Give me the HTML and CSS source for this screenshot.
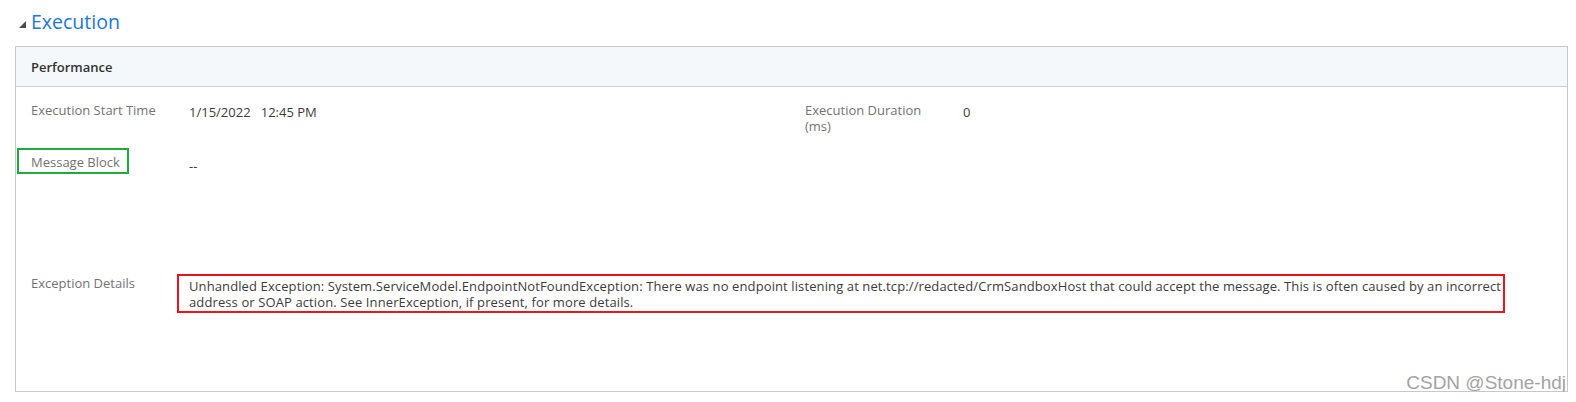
FILE: index.html
```html
<!DOCTYPE html>
<html lang="en">
<head>
<meta charset="utf-8">
<title>Execution</title>
<link rel="stylesheet" href="styles.css">
</head>
<body>
<div class="page">
  <div class="section-title">
    <svg class="caret" width="7" height="7" viewBox="0 0 7 7" aria-hidden="true"><polygon points="7,0 7,7 0,7" fill="#4a4a4a"/></svg>
    <span class="title-text">Execution</span>
  </div>
  <div class="panel">
    <div class="panel-header">Performance</div>
    <div class="panel-body">
      <div class="row row-two">
        <div class="label">Execution Start Time</div>
        <div class="value">1/15/2022&nbsp;&nbsp; 12:45 PM</div>
        <div class="label label-narrow">Execution Duration (ms)</div>
        <div class="value">0</div>
      </div>
      <div class="row row-msg">
        <div class="label"><span class="note-green">Message Block</span></div>
        <div class="value value-dash">--</div>
      </div>
      <div class="row row-exc">
        <div class="label">Exception Details</div>
        <div class="value value-boxed">Unhandled Exception: System.ServiceModel.EndpointNotFoundException: There was no endpoint listening at net.tcp://redacted/CrmSandboxHost that could accept the message. This is often caused by an incorrect<br>address or SOAP action. See InnerException, if present, for more details.</div>
      </div>
    </div>
    <div class="watermark">CSDN @Stone-hdj</div>
  </div>
</div>
</body>
</html>
```
FILE: styles.css
```css
html, body {
  margin: 0;
  padding: 0;
  background: #ffffff;
}

body {
  font-family: "Open Sans", "Noto Sans", sans-serif;
  color: #333333;
}

.page {
  padding: 0 8px 0 15px;
}

.section-title {
  height: 46px;
  box-sizing: border-box;
  padding-top: 8px;
  display: flex;
  align-items: flex-start;
}

.caret {
  margin: 13px 5px 0 4px;
  flex: none;
}

.title-text {
  font-size: 19.5px;
  line-height: 27px;
  color: #1a78d6;
}

.panel {
  position: relative;
  border: 1px solid #c8c8c8;
  height: 346px;
  box-sizing: border-box;
  display: flex;
  flex-direction: column;
}

.panel-header {
  background: #f4f8fb;
  border-bottom: 1px solid #cfcfcf;
  padding: 11px 15px 10px;
  font-size: 13px;
  line-height: 18px;
  font-weight: 600;
  color: #333333;
}

.panel-body {
  flex: 1;
  display: flex;
  flex-direction: column;
}

.row {
  display: grid;
  grid-template-columns: 158px 1fr;
  padding: 15px 0 0 15px;
  box-sizing: border-box;
  font-size: 13px;
  line-height: 16px;
}

.row-two {
  grid-template-columns: 158px 616px 158px 1fr;
  height: 52px;
}

.row-msg {
  height: 121px;
}

.row-exc {
  flex: 1;
}

.label {
  color: #737373;
  align-self: start;
}

.label-narrow {
  padding-right: 30px;
}

.value {
  color: #3c3c3c;
  margin-top: 2px;
  align-self: start;
}

.value-dash {
  margin-top: 4px;
}

.note-green {
  position: relative;
}

.note-green::before {
  content: "";
  position: absolute;
  left: -14px;
  top: -5px;
  width: 112px;
  height: 26px;
  box-sizing: border-box;
  border: 2px solid #22a93d;
}

.value-boxed {
  justify-self: start;
  margin-top: -1px;
  margin-left: -12px;
  width: 1328px;
  box-sizing: border-box;
  border: 2px solid #e8141e;
  padding: 2px 0 1px 10px;
  white-space: nowrap;
  letter-spacing: 0.11px;
}

.watermark {
  position: absolute;
  right: 1px;
  bottom: -3px;
  font-family: "Liberation Sans", Arial, sans-serif;
  font-size: 19px;
  line-height: 22px;
  color: #a3a3a3;
  text-shadow: 0 0 1px #ffffff;
}
```
